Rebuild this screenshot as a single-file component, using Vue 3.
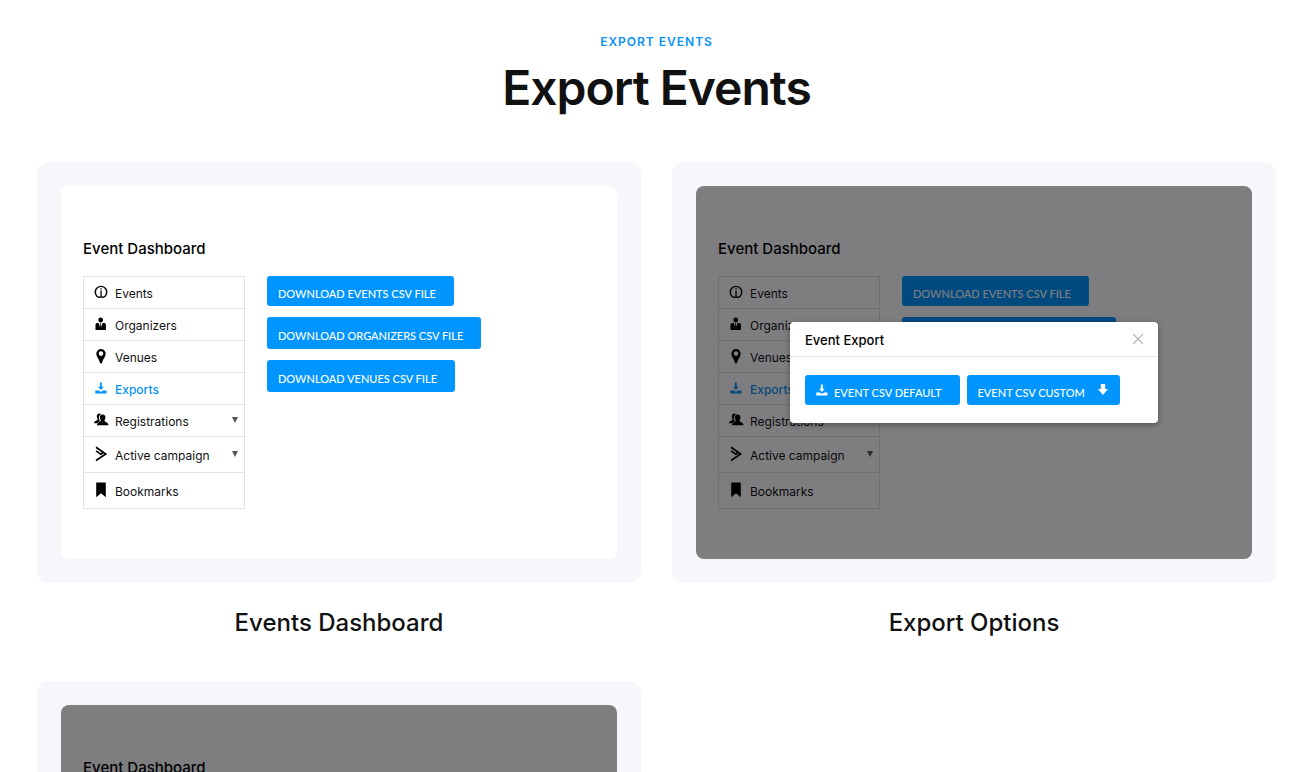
<script setup>
const cards = [
  { caption: 'Events Dashboard', dialog: false },
  { caption: 'Export Options', dialog: true },
  { caption: 'Custom Export', dialog: true },
]

const menu = [
  { label: 'Events', icon: 'info' },
  { label: 'Organizers', icon: 'organizer' },
  { label: 'Venues', icon: 'pin' },
  { label: 'Exports', icon: 'download', active: true },
  { label: 'Registrations', icon: 'people', caret: true },
  { label: 'Active campaign', icon: 'campaign', caret: true, tall: true },
  { label: 'Bookmarks', icon: 'bookmark', tall: true },
]

const downloads = ['EVENTS', 'ORGANIZERS', 'VENUES']
</script>

<template>
  <svg class="sprite" aria-hidden="true">
    <symbol id="i-info" viewBox="0 0 16 16">
      <path d="M6.4 13.700A5.800 5.800 0 1 1 9.600 13.700" fill="none" stroke="currentColor" stroke-width="1.400" />
      <path d="M7.4 4.2h1.3v1.4H7.4zM7.4 6.6h1.3v6.2H7.4zM5.8 12.600h4.4v1.1H5.8z" fill="currentColor" />
    </symbol>
    <symbol id="i-organizer" viewBox="0 0 16 16">
      <circle cx="7.700" cy="4" r="2.400" fill="currentColor" />
      <path d="M2.500 14V8.800Q2.500 7.200 4 7.100L5.800 6.900 7 11 7.400 8 7 7h1.400L8 8 8.400 11 9.600 6.900l1.800.2Q12.900 7.200 12.900 8.800V14z" fill="currentColor" />
    </symbol>
    <symbol id="i-pin" viewBox="0 0 16 16">
      <path fill-rule="evenodd" d="M8 1a4.700 4.700 0 0 0-4.700 4.700C3.300 8.700 6.500 11.400 7 15.200h2c.5-3.800 3.700-6.500 3.700-9.500A4.700 4.700 0 0 0 8 1zm0 2.300a2.300 2.300 0 1 1 0 4.600 2.300 2.300 0 0 1 0-4.600z" fill="currentColor" />
    </symbol>
    <symbol id="i-download" viewBox="0 0 16 16">
      <path d="M6.900 2.400h1.900v4.400h2L7.900 9.900 5 6.800h1.900zM2.300 10.400h3.500l1.200 1h1.800l1.200-1h3.500v3H2.300z" fill="currentColor" />
    </symbol>
    <symbol id="i-people" viewBox="0 0 16 16">
      <path d="M6.500 1.500c-2 0-3 1.300-2.700 3.200.2 1.500.8 2 .8 2.900C4.500 8.800 1 9 1 11.300h3.200c.6-1.400 2.200-1.800 2.800-2.400C5.300 6.700 5.500 3.800 8 2.300c-.4-.5-.9-.8-1.500-.8z" fill="currentColor" />
      <path d="M9.600 2.500c-2 0-3 1.400-2.700 3.300.2 1.400.8 1.900.9 2.800-.1 1.700-3.800 1.700-3.800 4.600h11.500c0-2.900-3.900-2.900-4-4.600.1-.9.700-1.400.9-2.800.3-1.900-.8-3.300-2.800-3.300z" fill="currentColor" />
    </symbol>
    <symbol id="i-campaign" viewBox="0 0 16 16">
      <path d="M3 1.300 12.700 8 3 14.500M3 4.900l4.800 3.300 1.800-1.200" fill="none" stroke="currentColor" stroke-width="1.700" />
    </symbol>
    <symbol id="i-bookmark" viewBox="0 0 16 16">
      <path d="M3.200 .5h9.600v14.800L8 11.300l-4.800 4z" fill="currentColor" />
    </symbol>
    <symbol id="i-arrow" viewBox="0 0 16 16">
      <path d="M5.800 2h4.400v5h2.800l-5 6-5-6h2.800z" fill="currentColor" />
    </symbol>
    <symbol id="i-close" viewBox="0 0 16 16">
      <path d="m3.200 3.200 9.600 9.600m0-9.600-9.600 9.600" fill="none" stroke="currentColor" stroke-width="1.200" />
    </symbol>
  </svg>

  <main class="page">
    <header class="intro">
      <p class="eyebrow">EXPORT EVENTS</p>
      <h1>Export Events</h1>
    </header>

    <div class="grid">
      <section v-for="card in cards" :key="card.caption" class="item">
        <div class="frame">
          <div class="screen">
            <h3>Event Dashboard</h3>
            <div class="dashboard">
              <nav class="menu" aria-label="Dashboard">
                <a
                  v-for="entry in menu"
                  :key="entry.label"
                  href="#"
                  :class="{ active: entry.active, tall: entry.tall }"
                >
                  <svg class="icon" aria-hidden="true"><use :href="'#i-' + entry.icon" /></svg>
                  <span class="label">{{ entry.label }}</span>
                  <span v-if="entry.caret" class="caret"></span>
                </a>
              </nav>
              <div class="downloads">
                <button v-for="name in downloads" :key="name" type="button" class="btn">
                  DOWNLOAD {{ name }} CSV FILE
                </button>
              </div>
            </div>

            <div v-if="card.dialog" class="overlay">
              <div class="modal" role="dialog" aria-label="Event Export">
                <div class="modal-head">
                  <h4>Event Export</h4>
                  <button type="button" class="close" aria-label="Close">
                    <svg class="icon" aria-hidden="true"><use href="#i-close" /></svg>
                  </button>
                </div>
                <div class="modal-body">
                  <button type="button" class="btn icon-start">
                    <svg class="icon" aria-hidden="true"><use href="#i-download" /></svg>
                    <span>EVENT CSV DEFAULT</span>
                  </button>
                  <button type="button" class="btn icon-end">
                    <span>EVENT CSV CUSTOM</span>
                    <svg class="icon" aria-hidden="true"><use href="#i-arrow" /></svg>
                  </button>
                </div>
              </div>
            </div>
          </div>
        </div>
        <h2>{{ card.caption }}</h2>
      </section>
    </div>
  </main>
</template>

<style>
body {
  margin: 0;
  background: #fff;
}
</style>

<style scoped>
.sprite {
  position: absolute;
  width: 0;
  height: 0;
}
.page {
  padding: 32px 25px 40px 37px;
  font-family: Inter, "Liberation Sans", sans-serif;
  color: #111;
}
h1, h2, h3, h4, p {
  margin: 0;
}
.intro {
  text-align: center;
}
.eyebrow {
  font-size: 12px;
  line-height: 20px;
  font-weight: 600;
  letter-spacing: 1px;
  color: #0693f8;
}
h1 {
  margin-top: 8px;
  font-size: 48px;
  line-height: 56px;
  font-weight: 600;
  letter-spacing: -1px;
}
.grid {
  margin-top: 46px;
  display: grid;
  grid-template-columns: 1fr 1fr;
  column-gap: 31px;
  row-gap: 42px;
}
.frame {
  padding: 24px;
  border-radius: 12px;
  background: #f6f6fb;
}
.screen {
  position: relative;
  box-sizing: border-box;
  aspect-ratio: 556 / 373;
  padding: 52px 22px 0;
  border-radius: 8px;
  overflow: hidden;
  background: #fff;
  color: #000;
}
h2 {
  margin-top: 24px;
  font-size: 24px;
  line-height: 32px;
  font-weight: 500;
  text-align: center;
}
h3 {
  font-size: 15px;
  line-height: 22px;
  font-weight: 500;
}
.dashboard {
  margin-top: 16px;
  display: flex;
  align-items: flex-start;
  gap: 22px;
}
.menu {
  box-sizing: border-box;
  width: 162px;
  border: 1px solid #e3e3e3;
  border-top: 0;
}
.menu a {
  box-sizing: border-box;
  display: flex;
  align-items: center;
  gap: 6px;
  height: 32px;
  padding: 0 6px 0 9px;
  border-top: 1px solid #e3e3e3;
  font-size: 12px;
  color: #111;
  text-decoration: none;
}
.menu a.tall {
  height: 36px;
}
.menu a.active {
  color: #0693f8;
  font-weight: 500;
}
.menu .icon {
  color: #000;
  margin-bottom: 2px;
}
.menu .active .icon {
  color: #0693f8;
}
.label {
  flex: 1;
  padding-top: 2px;
  white-space: nowrap;
}
.caret {
  margin-bottom: 2px;
  border: 3px solid transparent;
  border-top: 6px solid #555;
  border-bottom: 0;
}
.icon {
  flex: none;
  display: block;
  width: 16px;
  height: 16px;
}
.downloads {
  display: flex;
  flex-direction: column;
  align-items: flex-start;
  gap: 11px;
}
.btn {
  display: flex;
  align-items: center;
  height: 32px;
  padding: 4px 18px 0 11px;
  border: 0;
  border-radius: 3px;
  background: #0095ff;
  color: #fff;
  font-family: Lato, Inter, sans-serif;
  font-size: 11px;
  font-weight: 500;
  white-space: nowrap;
}
.downloads .btn:first-child,
.modal .btn {
  height: 30px;
}
.overlay {
  position: absolute;
  inset: 0;
  display: grid;
  place-items: center;
  background: rgba(2, 2, 5, 0.51);
}
.modal {
  width: 368px;
  border-radius: 4px;
  background: #fff;
  box-shadow: 0 2px 6px rgba(0, 0, 0, 0.35);
}
.modal-head {
  display: flex;
  align-items: center;
  justify-content: space-between;
  height: 34px;
  padding: 0 12px 0 15px;
  border-bottom: 1px solid #e8e8e8;
}
h4 {
  padding-top: 2px;
  font-size: 13px;
  line-height: 20px;
  font-weight: 500;
}
.close {
  padding: 0;
  border: 0;
  background: none;
  color: #aaa;
}
.modal-body {
  display: flex;
  gap: 7px;
  padding: 18px 15px;
}
.modal .icon-start {
  gap: 4px;
  padding-left: 9px;
}
.modal .icon-end {
  gap: 10px;
  padding-right: 9px;
}
.btn .icon {
  margin-bottom: 4px;
}
</style>
